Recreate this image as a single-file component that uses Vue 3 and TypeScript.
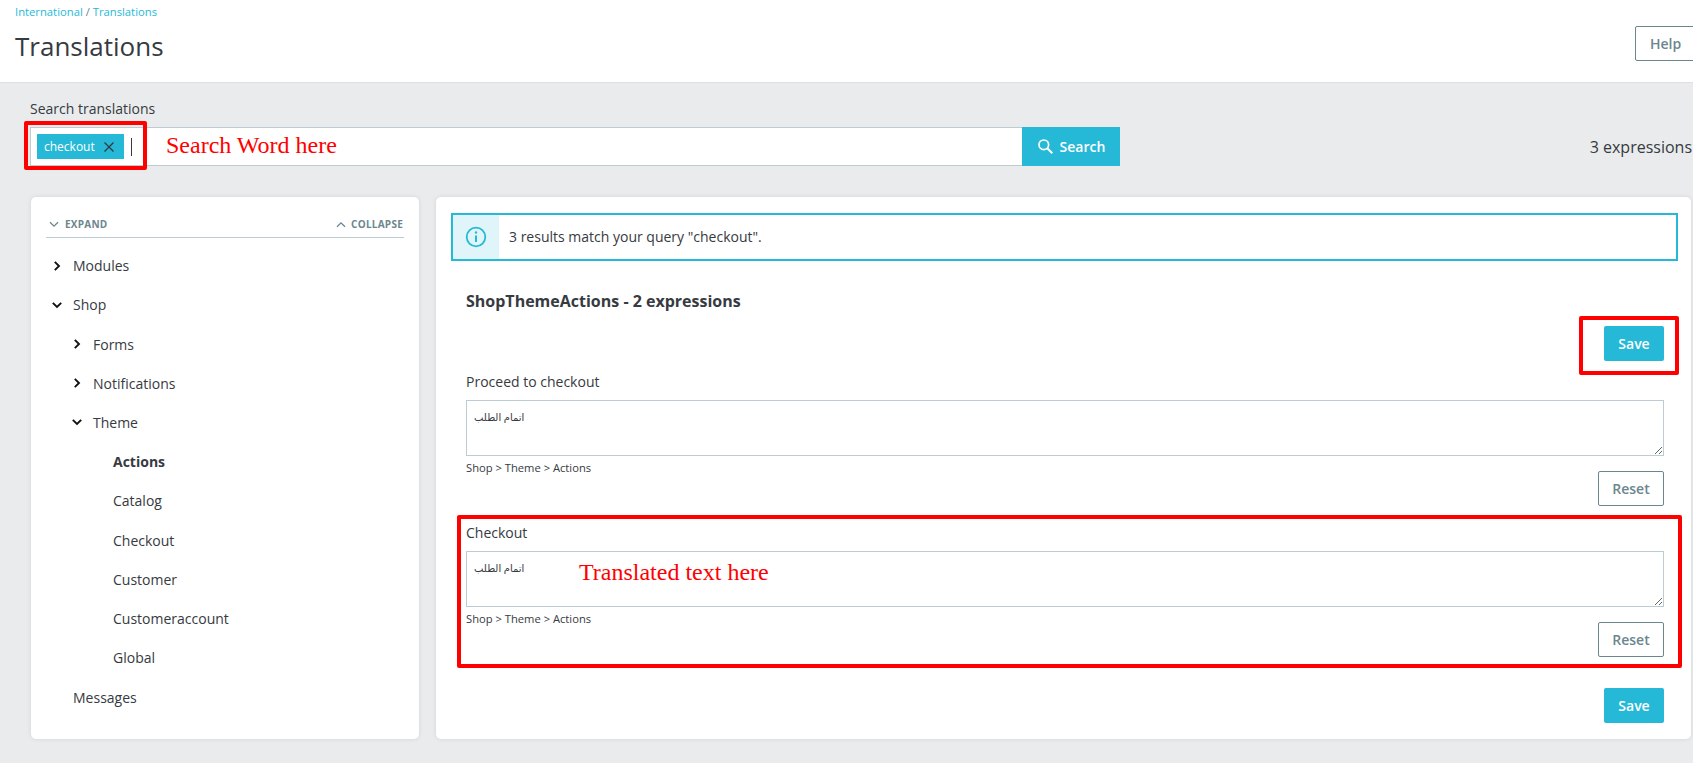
<script setup lang="ts">
interface TreeRow {
  label: string;
  depth: number;
  icon?: 'right' | 'down';
  active?: boolean;
}

interface Expression {
  label: string;
  value: string;
}

const tree: TreeRow[] = [
  { label: 'Modules', depth: 0, icon: 'right' },
  { label: 'Shop', depth: 0, icon: 'down' },
  { label: 'Forms', depth: 1, icon: 'right' },
  { label: 'Notifications', depth: 1, icon: 'right' },
  { label: 'Theme', depth: 1, icon: 'down' },
  { label: 'Actions', depth: 2, active: true },
  { label: 'Catalog', depth: 2 },
  { label: 'Checkout', depth: 2 },
  { label: 'Customer', depth: 2 },
  { label: 'Customeraccount', depth: 2 },
  { label: 'Global', depth: 2 },
  { label: 'Messages', depth: 0 },
];

const expressions: Expression[] = [
  { label: 'Proceed to checkout', value: 'اتمام الطلب' },
  { label: 'Checkout', value: 'اتمام الطلب' },
];
</script>

<template>
  <div class="page">
    <header class="top">
      <div>
        <nav class="crumbs"><a>International</a> / <a>Translations</a></nav>
        <h1>Translations</h1>
      </div>
      <button class="btn-outline help">Help</button>
    </header>

    <section class="search">
      <label>Search translations</label>
      <div class="search-row">
        <div class="field">
          <span class="tag">
            checkout
            <svg width="12" height="12" viewBox="0 0 12 12"><path d="M1.5 1.5l9 9M10.500 1.500l-9 9" stroke="#363a41" stroke-width="1.300" fill="none" /></svg>
          </span>
          <span class="caret"></span>
        </div>
        <button class="btn-search">
          <svg width="17" height="17" viewBox="0 0 17 17"><circle cx="6.800" cy="6.800" r="4.800" stroke="#fff" stroke-width="1.700" fill="none" /><path d="M10.300 10.300l5 5" stroke="#fff" stroke-width="2" fill="none" /></svg>
          Search
        </button>
        <span class="count">3 expressions</span>
      </div>
    </section>

    <main class="cards">
      <aside class="card tree-card">
        <div class="tree-head">
          <span class="tree-action expand">
            <svg width="10" height="7" viewBox="0 0 10 7"><path d="M1 1.200l4 4 4-4" stroke="#6c868e" stroke-width="1.300" fill="none" /></svg>
            EXPAND
          </span>
          <span class="tree-action">
            <svg width="10" height="7" viewBox="0 0 10 7"><path d="M1 5.800l4-4 4 4" stroke="#6c868e" stroke-width="1.300" fill="none" /></svg>
            COLLAPSE
          </span>
        </div>
        <ul class="tree">
          <li v-for="row in tree" :key="row.label" :class="['tree-row', `depth-${row.depth}`, { active: row.active }]">
            <svg v-if="row.icon === 'right'" class="chev" width="12" height="12" viewBox="0 0 12 12"><path d="M3.800 1.800L8 6l-4.200 4.200" stroke="#111" stroke-width="1.900" fill="none" /></svg>
            <svg v-else-if="row.icon === 'down'" class="chev" width="12" height="12" viewBox="0 0 12 12"><path d="M1.800 3.800L6 8l4.200-4.200" stroke="#111" stroke-width="1.900" fill="none" /></svg>
            <span>{{ row.label }}</span>
          </li>
        </ul>
      </aside>

      <section class="card result-card">
        <div class="alert">
          <div class="alert-icon">
            <svg width="22" height="22" viewBox="0 0 22 22"><circle cx="11" cy="11" r="9.300" stroke="#25b9d7" stroke-width="1.800" fill="none" /><path d="M11 9.500v6.500" stroke="#25b9d7" stroke-width="2" fill="none" /><circle cx="11" cy="6.500" r="1.200" fill="#25b9d7" /></svg>
          </div>
          <p>3 results match your query "checkout".</p>
        </div>

        <div class="form">
          <h2>ShopThemeActions - 2 expressions</h2>
          <div class="save-row"><button class="btn-save">Save</button></div>
          <div v-for="expr in expressions" :key="expr.label" class="expr">
            <label>{{ expr.label }}</label>
            <textarea :value="expr.value"></textarea>
            <div class="expr-foot">
              <small>Shop &gt; Theme &gt; Actions</small>
              <button class="btn-outline reset">Reset</button>
            </div>
          </div>
          <div class="save-row last"><button class="btn-save">Save</button></div>
        </div>
      </section>
    </main>

    <div class="mark mark-search"></div>
    <div class="mark mark-save"></div>
    <div class="mark mark-expr"></div>
    <span class="note note-search">Search Word here</span>
    <span class="note note-text">Translated text here</span>
  </div>
</template>

<style>
html, body {
  margin: 0;
  overflow: hidden;
  background: #eaebec;
}
</style>

<style scoped>
.page {
  position: relative;
  width: 1693px;
  height: 763px;
  overflow: hidden;
  background: #eaebec;
  color: #363a41;
  font-family: "Open Sans", "Noto Sans", sans-serif;
  font-size: 14px;
}
button {
  font-family: inherit;
  cursor: pointer;
}
.top {
  display: flex;
  justify-content: space-between;
  align-items: flex-start;
  box-sizing: border-box;
  height: 83px;
  padding: 4px 0 0 15px;
  background: #fff;
  border-bottom: 1px solid #dfdfdf;
}
.crumbs {
  font-size: 11.25px;
  line-height: 16px;
  color: #6c868e;
}
.crumbs a {
  color: #25b9d7;
}
h1 {
  margin: 9px 0 0;
  font-size: 26px;
  line-height: 34px;
  font-weight: 400;
}
.btn-outline {
  box-sizing: border-box;
  height: 35px;
  background: #fff;
  border: 1px solid #6c868e;
  border-radius: 2px;
  color: #6c868e;
  font-size: 14px;
  font-weight: 600;
  padding: 0;
}
.help {
  width: 75px;
  margin: 22px -17px 0 0;
  text-align: left;
  padding-left: 14px;
}
.search {
  padding: 16px 0 0 30px;
}
.search > label {
  display: block;
  line-height: 20px;
  margin-bottom: 8px;
  font-size: 14px;
}
.search-row {
  display: flex;
  align-items: stretch;
  height: 39px;
}
.field {
  box-sizing: border-box;
  width: 992px;
  display: flex;
  align-items: center;
  gap: 7px;
  padding: 0 0 0 6px;
  background: #fff;
  border: 1px solid #bbcdd2;
  border-right: 0;
}
.tag {
  display: flex;
  align-items: center;
  justify-content: space-between;
  box-sizing: border-box;
  width: 87px;
  height: 25px;
  padding: 0 9px 0 7px;
  background: #25b9d7;
  color: #fff;
  font-size: 12px;
}
.caret {
  width: 1px;
  height: 18px;
  background: #363a41;
}
.btn-search {
  display: flex;
  align-items: center;
  justify-content: center;
  gap: 6px;
  width: 98px;
  background: #25b9d7;
  border: 0;
  color: #fff;
  font-size: 14px;
  font-weight: 600;
  padding: 0;
}
.count {
  margin-left: auto;
  align-self: center;
  font-size: 16px;
  font-weight: 500;
  white-space: nowrap;
  margin-right: 1px;
}
.cards {
  display: flex;
  gap: 17px;
  margin: 31px 0 0 31px;
  height: 542px;
}
.card {
  box-sizing: border-box;
  background: #fff;
  border-radius: 5px;
  box-shadow: 0 0 4px rgba(108, 134, 142, 0.2);
}
.tree-card {
  width: 388px;
  padding: 20px 15px 0;
}
.tree-head {
  display: flex;
  justify-content: space-between;
  height: 20px;
  border-bottom: 1px solid #bbcdd2;
  padding: 0 1px 0 3px;
}
.tree-action {
  display: flex;
  align-items: center;
  gap: 5px;
  height: 14px;
  font-size: 10px;
  font-weight: 700;
  letter-spacing: 0.25px;
  color: #6c868e;
}
.tree-action.expand {
  gap: 6px;
}
.tree {
  list-style: none;
  margin: 8.1px 0 0;
  padding: 0;
}
.tree-row {
  position: relative;
  display: flex;
  align-items: center;
  height: 39.2px;
}
.tree-row:last-child {
  margin-top: 0.6px;
}
.depth-0 { padding-left: 27px; }
.depth-1 { padding-left: 47px; }
.depth-2 { padding-left: 67px; }
.active { font-weight: 700; }
.chev {
  position: absolute;
  margin-left: -22px;
}
.result-card {
  width: 1255px;
  padding: 16px 0 0 15px;
}
.alert {
  box-sizing: border-box;
  display: flex;
  align-items: stretch;
  width: 1227px;
  height: 48px;
  border: 2px solid #25b9d7;
}
.alert-icon {
  display: flex;
  align-items: center;
  justify-content: center;
  width: 46px;
  background: #dff5f9;
}
.alert p {
  margin: 0 0 0 10px;
  align-self: center;
  line-height: 20px;
}
.form {
  padding: 29px 0 0 15px;
  width: 1198px;
}
h2 {
  margin: 0;
  font-size: 16px;
  line-height: 22px;
  font-weight: 700;
}
.save-row {
  display: flex;
  justify-content: flex-end;
  margin: 14px 0 11px;
}
.save-row.last {
  margin: 31px 0 0;
}
.btn-save {
  width: 60px;
  height: 35px;
  background: #25b9d7;
  border: 0;
  border-radius: 2px;
  color: #fff;
  font-size: 14px;
  font-weight: 600;
  padding: 0;
}
.expr + .expr {
  margin-top: 17px;
}
.expr label {
  display: block;
  line-height: 20px;
  margin-bottom: 8px;
}
textarea {
  display: block;
  box-sizing: border-box;
  width: 100%;
  height: 56px;
  margin: 0;
  padding: 9px 7px;
  border: 1px solid #bbcdd2;
  border-radius: 0;
  outline: none;
  font-family: "Noto Sans", "DejaVu Sans", sans-serif;
  font-size: 10px;
  line-height: 14px;
  color: #363a41;
}
.expr-foot {
  display: flex;
  justify-content: space-between;
  align-items: flex-start;
}
small {
  margin-top: 5px;
  font-size: 11.2px;
  line-height: 14px;
}
.reset {
  width: 66px;
  margin-top: 15px;
}
.mark {
  position: absolute;
  box-sizing: border-box;
  border: 4px solid #f00;
  border-radius: 2px;
  pointer-events: none;
}
.mark-search {
  left: 24px;
  top: 121px;
  width: 123px;
  height: 49px;
}
.mark-save {
  left: 1579px;
  top: 316px;
  width: 100px;
  height: 59px;
}
.mark-expr {
  left: 457px;
  top: 515px;
  width: 1225px;
  height: 153px;
}
.note {
  position: absolute;
  font-family: "Liberation Serif", serif;
  font-size: 24px;
  line-height: 28px;
  color: #f00;
  white-space: nowrap;
}
.note-search {
  left: 166px;
  top: 131px;
}
.note-text {
  left: 579px;
  top: 558px;
}
</style>
